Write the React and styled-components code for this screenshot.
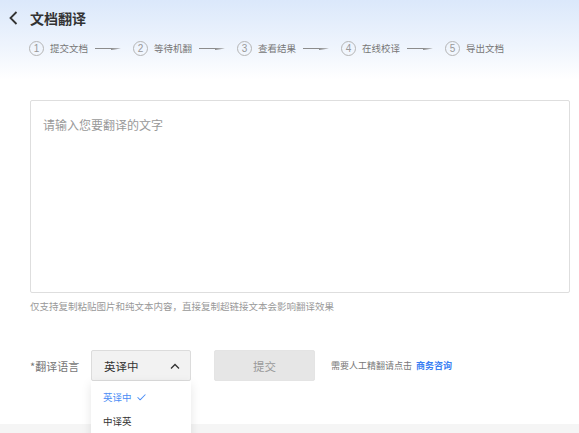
import React from 'react';
import styled, { createGlobalStyle } from 'styled-components';
import { Check } from 'lucide-react';

const GlobalStyle = createGlobalStyle`
  html, body {
    margin: 0;
    padding: 0;
    background: #fff;
    font-family: "Noto Sans CJK SC", "Noto Sans", sans-serif;
  }
  * { box-sizing: border-box; }
`;

const Page = styled.div`
  width: 579px;
  min-height: 433px;
  display: flex;
  flex-direction: column;
`;

const Header = styled.div`
  height: 100px;
  padding: 9px 0 0 9px;
  background: linear-gradient(180deg, #dbe8fb 0%, #eef4fd 45%, #ffffff 80%);
`;

const TitleRow = styled.div`
  display: flex;
  align-items: center;
  height: 18px;
  gap: 12px;
`;

const Title = styled.h1`
  margin: 0;
  font-size: 14px;
  line-height: 18px;
  font-weight: 700;
  color: #333;
`;

const Steps = styled.div`
  display: flex;
  align-items: center;
  margin: 13px 0 0 20px;
  height: 16px;
`;

const Step = styled.div`
  display: flex;
  align-items: center;
`;

const Circle = styled.span`
  width: 15px;
  height: 15px;
  border-radius: 50%;
  border: 1px solid #b5b5b5;
  color: #999;
  font-size: 10px;
  line-height: 13px;
  text-align: center;
  font-family: "Liberation Sans", sans-serif;
`;

const StepLabel = styled.span`
  margin-left: 6px;
  font-size: 9.5px;
  color: #777;
  white-space: nowrap;
`;

const Arrow = styled.svg`
  margin: 0 12px 0 7px;
  flex: none;
`;

const Main = styled.div`
  padding: 0 9px 0 30px;
  flex: none;
`;

const InputBox = styled.textarea`
  display: block;
  width: 540px;
  height: 193px;
  padding: 16px 12px;
  border: 1px solid #dedede;
  border-radius: 2px;
  resize: none;
  outline: none;
  font-family: inherit;
  font-size: 12px;
  line-height: 16px;
  color: #333;
  &::placeholder { color: #999; }
`;

const Hint = styled.p`
  margin: 8px 0 0;
  font-size: 9.5px;
  line-height: 11px;
  color: #999;
`;

const FormRow = styled.div`
  display: flex;
  align-items: center;
  margin-top: 38px;
  height: 31px;
`;

const Label = styled.span`
  width: 61px;
  font-size: 11px;
  color: #777;
`;

const SelectWrap = styled.div`
  position: relative;
  width: 100px;
  height: 31px;
`;

const Select = styled.div`
  height: 31px;
  display: flex;
  align-items: center;
  justify-content: space-between;
  padding: 0 10px 0 12px;
  background: #f2f2f2;
  border: 1px solid #dcdcdc;
  border-radius: 2px;
  font-size: 11.5px;
  color: #333;
`;

const Menu = styled.ul`
  position: absolute;
  top: 31px;
  left: 0;
  width: 100px;
  margin: 0;
  padding: 4px 0 0;
  list-style: none;
  background: #fff;
  box-shadow: 0 3px 10px rgba(0, 0, 0, 0.1);
  z-index: 2;
  height: 60px;
`;

const MenuItem = styled.li`
  display: flex;
  align-items: center;
  gap: 4px;
  height: 24px;
  padding-left: 12px;
  font-size: 9.5px;
  color: ${p => (p.$active ? '#4b8df5' : '#333')};
`;

const SubmitButton = styled.button`
  margin-left: 23px;
  width: 101px;
  height: 31px;
  border: 1px solid #e4e4e4;
  border-radius: 2px;
  background: #e6e6e6;
  color: #999;
  font-family: inherit;
  font-size: 11.5px;
`;

const Note = styled.span`
  margin-left: 16px;
  font-size: 9px;
  color: #777;
`;

const Link = styled.a`
  margin-left: 4px;
  color: #3b7ff3;
  font-weight: 700;
  text-decoration: none;
`;

const Footer = styled.div`
  margin-top: 43px;
  flex: 1;
  min-height: 9px;
  background: #f5f5f5;
`;

const steps = ['提交文档', '等待机翻', '查看结果', '在线校译', '导出文档'];

function StepArrow() {
  return (
    <Arrow width="26" height="7" viewBox="0 0 26 7">
      <path d="M0 3 H16 L26 3.5 L16 5 V4 H0 Z" fill="#8c8c8c" />
    </Arrow>
  );
}

export default function App() {
  return (
    <Page>
      <GlobalStyle />
      <Header>
        <TitleRow>
          <svg width="9" height="14" viewBox="0 0 9 14">
            <polyline points="7.5,1 1.5,7 7.5,13" fill="none" stroke="#333" strokeWidth="1.8" />
          </svg>
          <Title>文档翻译</Title>
        </TitleRow>
        <Steps>
          {steps.map((s, i) => (
            <Step key={s}>
              <Circle>{i + 1}</Circle>
              <StepLabel>{s}</StepLabel>
              {i < steps.length - 1 && <StepArrow />}
            </Step>
          ))}
        </Steps>
      </Header>
      <Main>
        <InputBox placeholder="请输入您要翻译的文字" />
        <Hint>仅支持复制粘贴图片和纯文本内容，直接复制超链接文本会影响翻译效果</Hint>
        <FormRow>
          <Label>*翻译语言</Label>
          <SelectWrap>
            <Select>
              英译中
              <svg width="10" height="6" viewBox="0 0 10 6">
                <polyline points="1,5.5 5,1.5 9,5.5" fill="none" stroke="#333" strokeWidth="1.3" />
              </svg>
            </Select>
            <Menu>
              <MenuItem $active>
                英译中 <Check size={11} strokeWidth={2.2} />
              </MenuItem>
              <MenuItem>中译英</MenuItem>
            </Menu>
          </SelectWrap>
          <SubmitButton>提交</SubmitButton>
          <Note>
            需要人工精翻请点击<Link href="#">商务咨询</Link>
          </Note>
        </FormRow>
      </Main>
      <Footer />
    </Page>
  );
}
